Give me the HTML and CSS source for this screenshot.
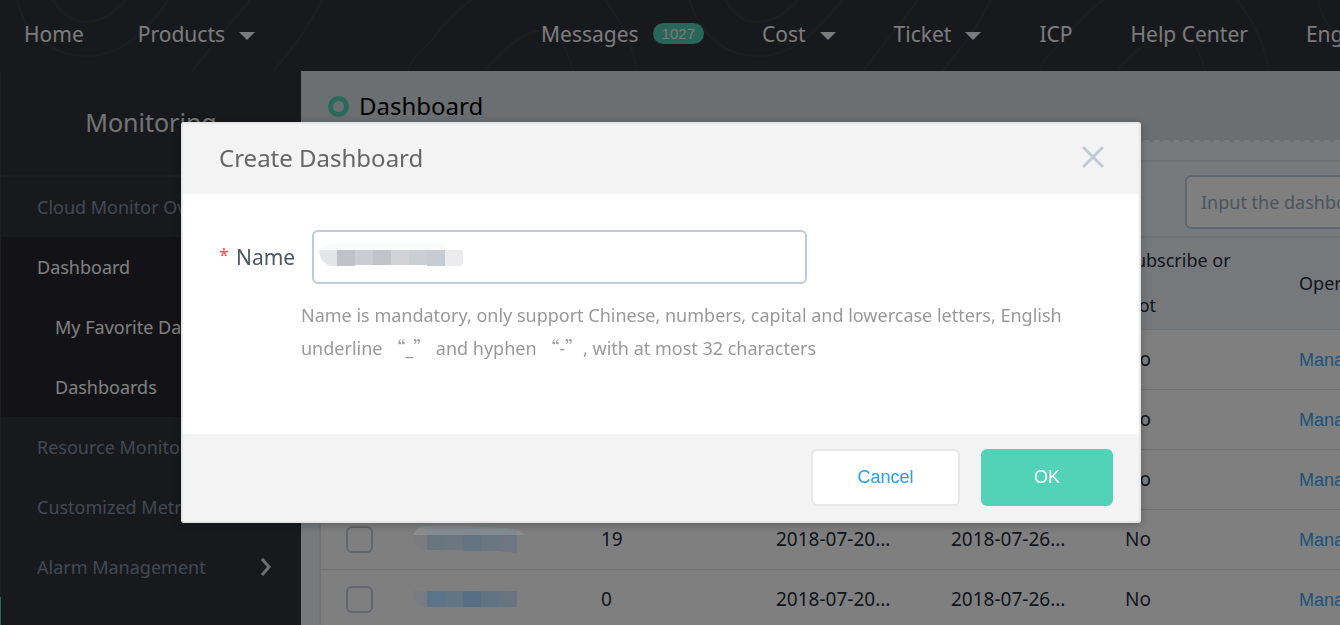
FILE: index.html
```html
<!DOCTYPE html>
<html lang="en">
<head>
<meta charset="utf-8">
<meta name="viewport" content="width=device-width, initial-scale=1">
<title>Dashboard - Monitoring</title>
<link rel="stylesheet" href="styles.css">
</head>
<body>
<header class="topbar">
  <svg class="topbar-pattern" width="1340" height="71" viewBox="0 0 1340 71" aria-hidden="true">
    <path d="M17 0C24 30 48 56 87 56C125 56 150 25 169 0M53 0C62 15 72 22 86 22C102 22 114 13 126 0M250 0L192 71M322 0Q305 35 273 71M471 0Q452 13 437 34C420 54 412 56 408 71M485 71C500 52 522 31 541 31C560 32 567 48 573 71M605 0Q632 36 637 71M690 0C697 30 721 56 758 56C797 56 822 25 842 0M725 0C734 15 744 22 757 22C774 22 786 13 798 0M918 0L863 71M991 0Q974 35 942 71M1103 0Q1084 13 1069 34C1052 54 1043 56 1040 71M1117 71C1132 52 1160 31 1176 31C1192 31 1199 48 1205 71M1237 0Q1262 30 1269 71M1318 0Q1323 23 1340 38"/>
  </svg>
  <nav class="nav" aria-label="Main">
    <div class="nav-group nav-left">
      <a href="#">Home</a>
      <a href="#">Products <i class="caret"></i></a>
    </div>
    <div class="nav-group nav-right">
      <a href="#">Messages <span class="badge">1027</span></a>
      <a href="#">Cost <i class="caret"></i></a>
      <a href="#">Ticket <i class="caret"></i></a>
      <a href="#">ICP</a>
      <a href="#">Help Center</a>
      <a href="#">English</a>
    </div>
  </nav>
</header>

<div class="page">
  <aside class="sidebar">
    <h2 class="sidebar-title">Monitoring</h2>
    <ul class="menu">
      <li><a href="#">Cloud Monitor Overview</a></li>
      <li class="open">
        <a href="#">Dashboard</a>
        <ul class="submenu">
          <li><a href="#">My Favorite Dashboards</a></li>
          <li><a href="#">Dashboards</a></li>
        </ul>
      </li>
      <li><a href="#">Resource Monitoring</a></li>
      <li><a href="#">Customized Metrics</a></li>
      <li><a href="#">Alarm Management
        <svg class="chevron" width="12" height="20" viewBox="0 0 12 20" aria-hidden="true"><path d="M2 2L9 10L2 18"/></svg></a></li>
    </ul>
    <div class="marker"></div>
  </aside>

  <main class="content">
    <div class="content-head">
      <h1><span class="ring"></span>Dashboard</h1>
    </div>
    <section class="panel">
      <div class="toolbar">
        <input class="search" type="text" placeholder="Input the dashboard name" aria-label="Search dashboards">
      </div>
      <table class="grid">
        <colgroup>
          <col class="c-check"><col class="c-name"><col class="c-mid"><col class="c-mid"><col class="c-late"><col class="c-late"><col class="c-late">
        </colgroup>
        <thead>
          <tr><th></th><th></th><th></th><th></th><th></th><th>Subscribe or Not</th><th>Operation</th></tr>
        </thead>
        <tbody>
          <tr><td></td><td></td><td></td><td></td><td></td><td>No</td><td><a href="#">Manage</a></td></tr>
          <tr><td></td><td></td><td></td><td></td><td></td><td>No</td><td><a href="#">Manage</a></td></tr>
          <tr><td></td><td></td><td></td><td></td><td></td><td>No</td><td><a href="#">Manage</a></td></tr>
          <tr>
            <td><input type="checkbox" aria-label="Select row 4"></td>
            <td><svg class="mosaic" width="112" height="28" viewBox="0 0 112 28" aria-hidden="true">
              <path fill="#8b8d8f" d="M0 10Q3 1 14 1V10Z"/><path fill="#838b93" d="M14 1H50L90 3Q100 3 106 6L104 10H14Z"/><path fill="#8b8d8f" d="M104 5Q109 6 112 10H104Z"/>
              <path fill="#7a7c80" d="M0 10H14V25H10Q0 22 0 10Z"/>
              <path fill="#66757e" d="M14 10H32V25H14Z"/><path fill="#6a7781" d="M32 10H50V25H32Z"/><path fill="#647480" d="M50 10H68V26H50Z"/><path fill="#697783" d="M68 10H86V26H68Z"/><path fill="#6d7681" d="M86 10H104V28L86 26Z"/>
            </svg></td>
            <td>19</td><td>2018-07-20...</td><td>2018-07-26...</td><td>No</td><td><a href="#">Manage</a></td>
          </tr>
          <tr>
            <td><input type="checkbox" aria-label="Select row 5"></td>
            <td><svg class="mosaic" width="112" height="28" viewBox="0 0 112 28" aria-hidden="true">
              <path fill="#797b82" d="M0 6H14V22H12Q0 20 0 6Z"/>
              <path fill="#5d7387" d="M14 6H32V22H14Z"/><path fill="#617585" d="M32 6H50V22H32Z"/><path fill="#566d84" d="M50 6H68V22H50Z"/><path fill="#5f7385" d="M68 6H86V22H68Z"/><path fill="#667580" d="M86 6H104V22H86Z"/>
            </svg></td>
            <td>0</td><td>2018-07-20...</td><td>2018-07-26...</td><td>No</td><td><a href="#">Manage</a></td>
          </tr>
        </tbody>
      </table>
    </section>
  </main>
</div>

<div class="backdrop"></div>
<div class="modal-wrap">
  <form class="modal" role="dialog" aria-modal="true" aria-labelledby="modal-title">
    <div class="modal-head">
      <h2 id="modal-title">Create Dashboard</h2>
      <button class="close" type="button" aria-label="Close">
        <svg width="22" height="22" viewBox="0 0 22 22" aria-hidden="true"><path d="M2 2L20 20M20 2L2 20"/></svg>
      </button>
    </div>
    <div class="modal-body">
      <div class="field">
        <label for="name"><span class="required">*</span>Name</label>
        <div class="input-box">
          <input id="name" type="text">
          <svg class="mask" width="144" height="23" viewBox="0 0 144 23" aria-hidden="true">
            <path fill="#fafbfb" d="M0 7Q4 1 18 0H126V7Z"/>
            <path fill="#e4e5e6" d="M0 7H18V23H13Q1 21 0 7Z"/>
            <path fill="#bfc2c9" d="M18 7H36V23H18Z"/><path fill="#cacdd2" d="M36 7H54V22H36Z"/><path fill="#c0c3ca" d="M54 7H72V22H54Z"/><path fill="#d2d3d6" d="M72 7H90V22H72Z"/><path fill="#cbcfd4" d="M90 7H108V22H90Z"/><path fill="#c7cbd2" d="M108 7H126V23H108Z"/><path fill="#ececef" d="M126 7H144V21Q143 23 140 23H126Z"/>
          </svg>
        </div>
      </div>
      <p class="hint">Name is mandatory, only support Chinese, numbers, capital and lowercase letters, English underline <span class="wide">“</span>_<span class="wide">”</span> and hyphen <span class="wide">“</span>-<span class="wide">”</span>, with at most 32 characters</p>
    </div>
    <div class="modal-foot">
      <button class="btn btn-cancel" type="button">Cancel</button>
      <button class="btn btn-ok" type="submit">OK</button>
    </div>
  </form>
</div>
</body>
</html>
```

FILE: styles.css
```css
* { box-sizing: border-box; }

body {
  margin: 0;
  min-height: 100vh;
  display: flex;
  flex-direction: column;
  overflow: hidden;
  background: #30323a;
  color: #1f2d3d;
  font-family: "Noto Sans", "Open Sans", sans-serif;
  font-size: 18px;
}

h1, h2, p, ul { margin: 0; padding: 0; font-weight: 400; }
ul { list-style: none; }
a { text-decoration: none; }

/* Top navigation */
.topbar { position: relative; overflow: hidden; background: #30323b; }
.topbar-pattern { position: absolute; top: 0; left: 0; }
.topbar-pattern path { fill: none; stroke: #393b43; stroke-width: 2; }
.nav {
  position: relative;
  display: flex;
  height: 71px;
  padding: 0 24px 4px;
  font-size: 21px;
  white-space: nowrap;
}
.nav-group { display: flex; align-items: center; }
.nav-left { flex: 0 0 517px; gap: 54px; }
.nav-right { gap: 58px; }
.nav a { display: flex; align-items: center; gap: 14px; color: #fff; opacity: .96; }
.caret {
  border: 8px solid transparent;
  border-top-color: #fff;
  border-bottom: 0;
  margin-top: 4px;
}
.badge {
  padding: 0 9px;
  border-radius: 11px;
  background: #52d3b7;
  font: 15px/21px "Liberation Sans", Arial, sans-serif;
}

/* Page frame */
.page { display: flex; flex: 1; }
.sidebar {
  display: flex;
  flex: 0 0 301px;
  flex-direction: column;
  border-left: 1px solid #383c56;
  white-space: nowrap;
}
.sidebar-title {
  padding-bottom: 1px;
  border-bottom: 2px solid #3a3c44;
  font-size: 25px;
  line-height: 103px;
  text-align: center;
  color: #e8e8e8;
}
.menu a {
  display: flex;
  align-items: center;
  justify-content: space-between;
  height: 60px;
  padding: 0 29px 0 36px;
  color: #8492a6;
}
.menu .open { background: #26272f; }
.menu .open a { color: #fff; }
.menu .submenu a { padding-left: 54px; }
.chevron path { fill: none; stroke: #e0e0e0; stroke-width: 3; }
.marker { flex: 1; width: 1px; margin-left: -1px; background: #52d3b7; }

.content { flex: 1; min-width: 0; overflow: hidden; background: #ecf5fa; }
.content-head {
  height: 71px;
  padding: 0 27px;
  border-bottom: 2px dashed #f2f8fb;
  background: #d7dfe4;
}
.content-head h1 {
  display: flex;
  align-items: center;
  gap: 10px;
  font-size: 24px;
  line-height: 70px;
  color: #000;
}
.ring { width: 21px; height: 21px; border: 5px solid #52d3b7; border-radius: 50%; }

.panel { margin: 18px 0 0 18px; border: 2px solid #dfe6ec; width: max-content; }
.toolbar { display: flex; padding: 13px 0 7px 864px; }
.search {
  width: 268px;
  height: 54px;
  padding: 0 14px;
  border: 2px solid #c0ccda;
  border-radius: 6px;
  background: #fff;
  font: inherit;
}
.search::placeholder { color: #99a9bf; opacity: 1; }

.grid { table-layout: fixed; width: 1134px; border-collapse: collapse; background: #fff; }
.c-check { width: 74px; }
.c-name { width: 188px; }
.c-mid { width: 175px; }
.c-late { width: 174px; }
.grid th {
  height: 92px;
  padding: 0 18px;
  border-top: 2px solid #dfe6ec;
  border-bottom: 1px solid #dfe6ec;
  background: #eef1f6;
  font-weight: 400;
  line-height: 45px;
  text-align: left;
}
.grid td { height: 60px; padding: 0 18px; border-bottom: 1px solid #dfe1e4; font-size: 19px; }
.grid td:first-child { padding-left: 25px; }
.grid a { color: #36a9f5; font: 18px "Liberation Sans", Arial, sans-serif; }
.grid input {
  display: block;
  width: 27px;
  height: 27px;
  margin: 0;
  appearance: none;
  border: 2px solid #c0ccda;
  border-radius: 6px;
}
.mosaic { display: block; position: relative; z-index: 2; }

/* Dialog */
.backdrop { position: fixed; inset: 0; z-index: 1; background: rgba(0, 0, 0, .5); }
.modal-wrap {
  position: fixed;
  inset: 0;
  z-index: 3;
  display: flex;
  justify-content: center;
  align-items: flex-start;
  padding: 122px 18px 0 0;
}
.modal {
  width: 960px;
  max-width: 100%;
  border: 2px solid #e6e6e6;
  border-radius: 3px;
  background: #fff;
  box-shadow: 0 2px 10px rgba(0, 0, 0, .25);
}
.modal-head {
  display: flex;
  align-items: center;
  justify-content: space-between;
  height: 70px;
  padding: 0 35px 4px 36px;
  background: #f3f3f3;
}
.modal-head h2 { font-size: 24px; color: #666; }
.close { display: flex; padding: 0; border: 0; background: none; }
.close path { fill: none; stroke: #bfcbd9; stroke-width: 3; stroke-linecap: round; }
.modal-body { min-height: 240px; padding: 36px 26px 36px 36px; }
.field { display: flex; align-items: center; }
.field label { flex: 0 0 93px; display: flex; gap: 7px; font-size: 21px; color: #48576a; }
.required { color: #ff4949; font-size: 18px; }
.input-box { position: relative; flex: 0 1 495px; }
.input-box input {
  display: block;
  width: 100%;
  height: 54px;
  padding: 0 10px;
  border: 2px solid #bfcbd9;
  border-radius: 6px;
  font: inherit;
}
.mask { position: absolute; top: 13px; left: 7px; }
.hint { margin: 15px 0 0 82px; line-height: 33px; color: #999; }
.wide { font-family: "Noto Sans CJK SC", sans-serif; line-height: 1; }
.modal-foot {
  display: flex;
  justify-content: flex-end;
  gap: 21px;
  padding: 15px 26px;
  background: #f3f3f3;
}
.btn {
  height: 57px;
  border: 2px solid #e8e8e8;
  border-radius: 6px;
  font: 18px "Liberation Sans", Arial, sans-serif;
}
.btn-cancel { width: 149px; background: #fff; color: #20a0ff; }
.btn-ok { width: 132px; border-color: #52d3b7; background: #52d3b7; color: #fff; }
```
